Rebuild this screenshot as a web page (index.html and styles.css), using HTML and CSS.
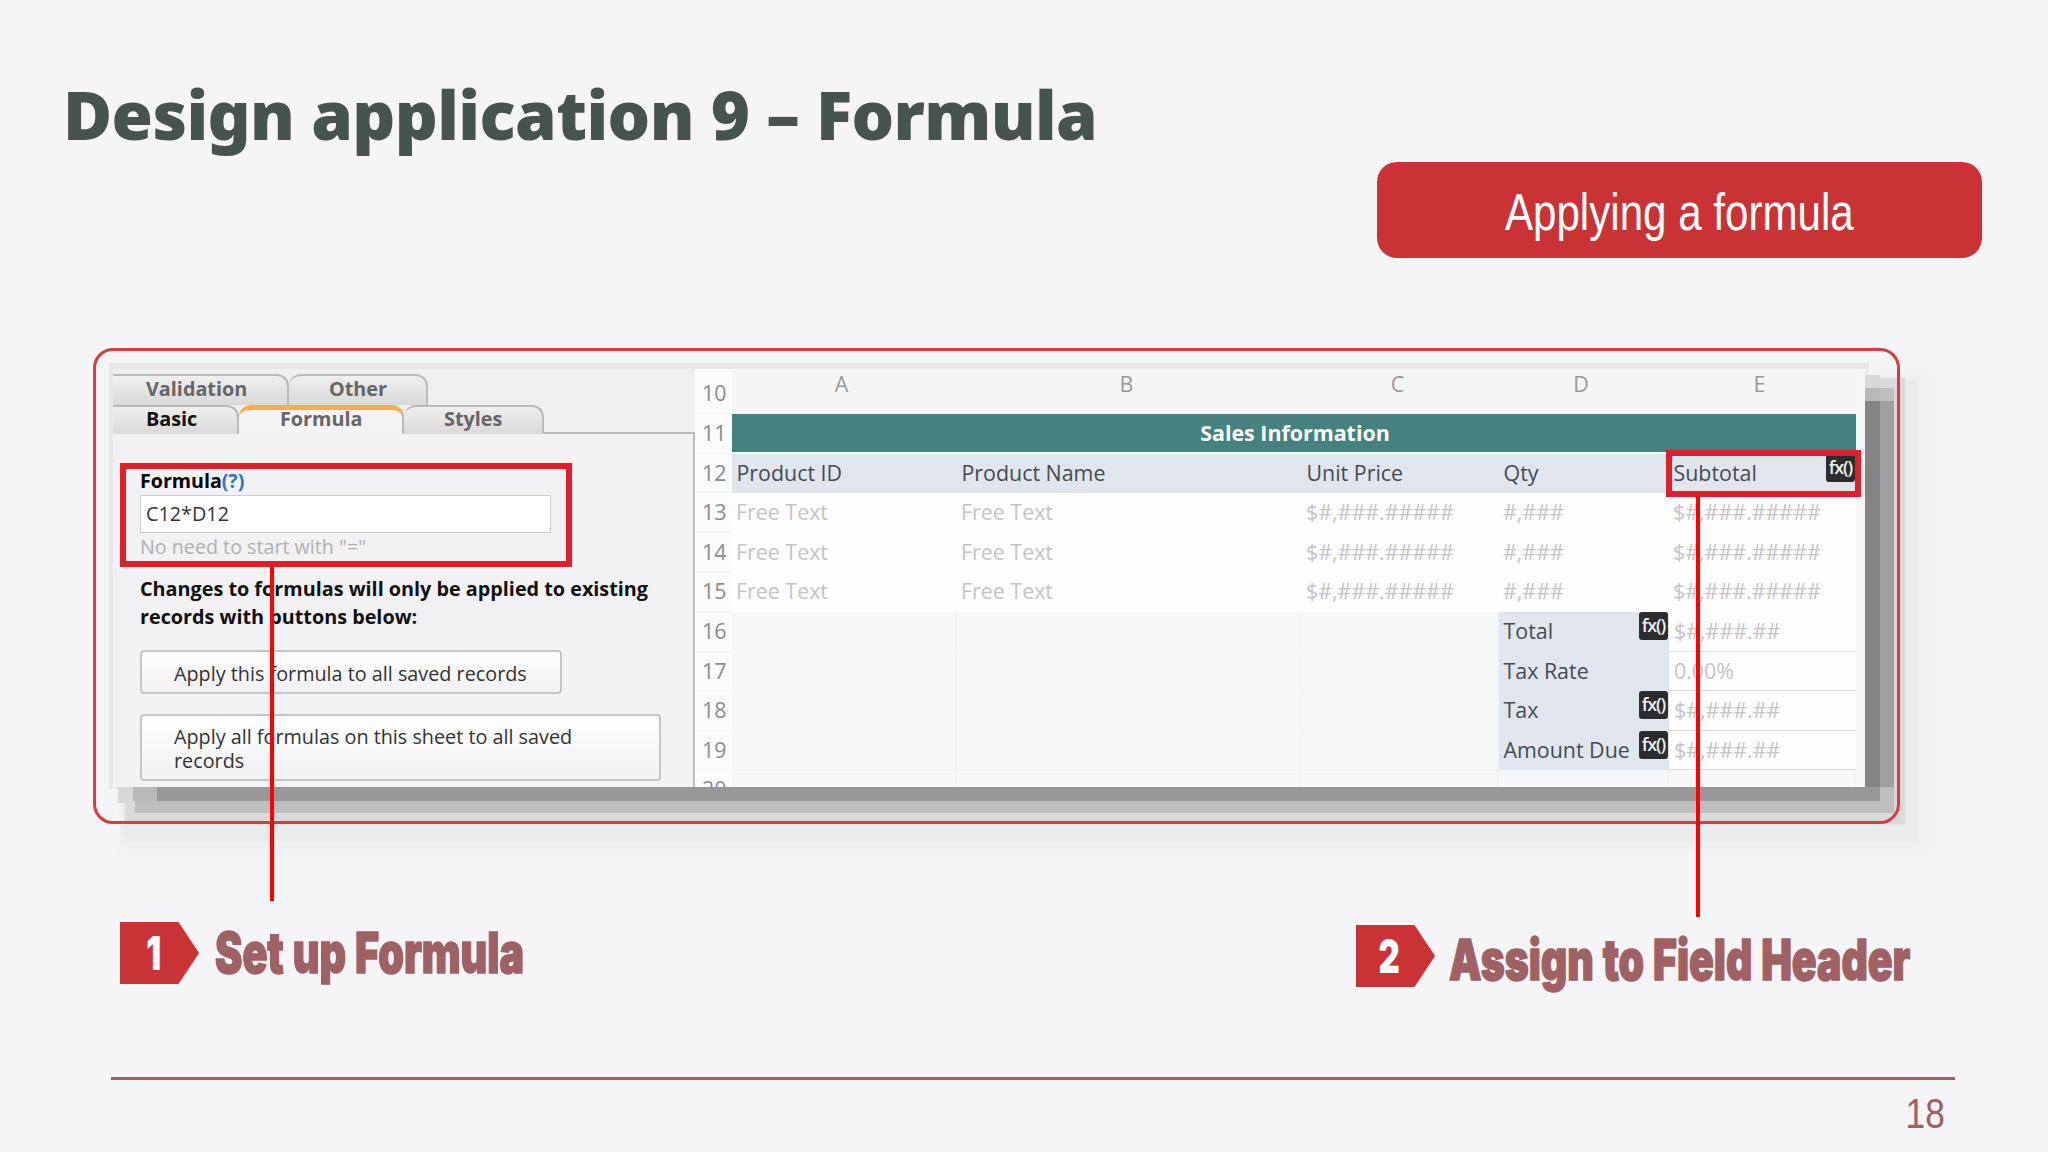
FILE: index.html
```
<!DOCTYPE html>
<html lang="en">
<head>
    <meta charset="UTF-8">
    <meta name="viewport" content="width=device-width, initial-scale=1.0">
    <title>Design application 9 – Formula</title>
    <link rel="stylesheet" href="styles.css">
</head>
<body>
    <div class="slide">
        <h1>Design application 9 – Formula</h1>
        <div class="topic"><span>Applying a formula</span></div>

        <div class="frame">
            <div class="app">
                <div class="panel">
                    <div class="tabs back-row">
                        <div class="tab tab-validation">Validation</div>
                        <div class="tab tab-other">Other</div>
                    </div>
                    <div class="tabs front-row">
                        <div class="tab tab-basic">Basic</div>
                        <div class="tab tab-formula">Formula</div>
                        <div class="tab tab-styles">Styles</div>
                        <div class="tab-line"></div>
                    </div>
                    <div class="settings">
                        <div class="field-label">Formula<span class="help">(?)</span></div>
                        <div class="input">C12*D12</div>
                        <div class="hint">No need to start with "="</div>
                        <div class="note">Changes to formulas will only be applied to existing<br>records with buttons below:</div>
                        <div class="btn btn-one">Apply this formula to all saved records</div>
                        <div class="btn btn-all">Apply all formulas on this sheet to all saved<br>records</div>
                    </div>
                </div>

                <div class="sheet">
                    <div class="num first">10</div>
                    <div class="col-head">A</div>
                    <div class="col-head">B</div>
                    <div class="col-head">C</div>
                    <div class="col-head">D</div>
                    <div class="col-head">E</div>

                    <div class="num">11</div>
                    <div class="banner">Sales Information</div>

                    <div class="num">12</div>
                    <div class="label">Product ID</div>
                    <div class="label">Product Name</div>
                    <div class="label">Unit Price</div>
                    <div class="label">Qty</div>
                    <div class="label">Subtotal<span class="fx">fx()</span></div>

                    <div class="num">13</div>
                    <div class="value">Free Text</div>
                    <div class="value">Free Text</div>
                    <div class="value">$#,###.#####</div>
                    <div class="value">#,###</div>
                    <div class="value">$#,###.#####</div>

                    <div class="num">14</div>
                    <div class="value">Free Text</div>
                    <div class="value">Free Text</div>
                    <div class="value">$#,###.#####</div>
                    <div class="value">#,###</div>
                    <div class="value">$#,###.#####</div>

                    <div class="num">15</div>
                    <div class="value">Free Text</div>
                    <div class="value">Free Text</div>
                    <div class="value">$#,###.#####</div>
                    <div class="value">#,###</div>
                    <div class="value">$#,###.#####</div>

                    <div class="num">16</div>
                    <div class="empty"></div>
                    <div class="empty"></div>
                    <div class="empty"></div>
                    <div class="label">Total<span class="fx">fx()</span></div>
                    <div class="value lined">$#,###.##</div>

                    <div class="num">17</div>
                    <div class="empty"></div>
                    <div class="empty"></div>
                    <div class="empty"></div>
                    <div class="label">Tax Rate</div>
                    <div class="value lined">0.00%</div>

                    <div class="num">18</div>
                    <div class="empty"></div>
                    <div class="empty"></div>
                    <div class="empty"></div>
                    <div class="label">Tax<span class="fx">fx()</span></div>
                    <div class="value lined">$#,###.##</div>

                    <div class="num">19</div>
                    <div class="empty"></div>
                    <div class="empty"></div>
                    <div class="empty"></div>
                    <div class="label">Amount Due<span class="fx">fx()</span></div>
                    <div class="value lined">$#,###.##</div>

                    <div class="num">20</div>
                    <div class="empty"></div>
                    <div class="empty"></div>
                    <div class="empty"></div>
                    <div class="empty"></div>
                    <div class="empty"></div>
                </div>
            </div>

            <!-- callouts over the app window -->
            <div class="outline"></div>
            <div class="mark mark-formula"></div>
            <div class="mark mark-subtotal"></div>
            <div class="line line-one"></div>
            <div class="line line-two"></div>
        </div>

        <div class="steps">
            <div class="step">
                <div class="marker"><span>1</span></div>
                <div class="step-text">Set up Formula</div>
            </div>
            <div class="step second">
                <div class="marker"><span>2</span></div>
                <div class="step-text">Assign to Field Header</div>
            </div>
        </div>

        <div class="footer"><span>18</span></div>
    </div>
</body>
</html>
```
FILE: styles.css
```
* {
    box-sizing: border-box;
}

body {
    margin: 0;
    background: #f5f4f6;
    font-family: "Open Sans", "Noto Sans", sans-serif;
}

.slide {
    width: 2048px;
    height: 1152px;
    overflow: hidden;
    display: flex;
    flex-direction: column;
}

h1 {
    margin: 74px 0 0 63px;
    height: 88px;
    font-family: "Noto Sans", "Open Sans", sans-serif;
    font-size: 67px;
    font-weight: 900;
    line-height: 80px;
    letter-spacing: -0.6px;
    color: #475350;
    white-space: nowrap;
}

.topic {
    align-self: flex-end;
    width: 605px;
    height: 96px;
    margin-right: 66px;
    border-radius: 20px;
    background: #ca3335;
    color: white;
    display: flex;
    justify-content: center;
    font-family: "Liberation Sans", Arial, sans-serif;
    font-size: 52px;
    line-height: 100px;
    white-space: nowrap;
}

.topic span {
    transform: scaleX(0.81);
}

/* app window in the red frame */
.frame {
    position: relative;
    width: 1807px;
    height: 476px;
    margin: 90px 0 0 93px;
    padding: 21px 0 0 20px;
}

.outline {
    position: absolute;
    inset: 0;
    border: 3px solid #d93c3e;
    border-radius: 20px;
}

/* stepped shadow, darkest band first */
.app {
    display: flex;
    width: 1752px;
    height: 418px;
    box-shadow:
        31px 16px 0 -16px #848385,
        29.5px 28.5px 0 -14.5px #999799,
        17.5px 16.5px 0 -2.5px #b8b7b9,
        45px 16px 0 -16px #9f9ea1,
        25.5px 22.5px 0 3.5px #bebdc0,
        10px 11px 0 5px #d8d8d9,
        26px 23px 1px 14px #dad9dc,
        31px 31px 3px 22px #ebeaea,
        36px 34px 6px 30px #f2f1f2,
        0 -2px 1px 4px #e8e9e9;
}

.panel {
    width: 582px;
    background: #efefef;
    padding-top: 5px;
    overflow: hidden;
}

.tabs {
    display: flex;
    font-size: 19.8px;
    font-weight: bold;
    line-height: 25px;
    color: #666;
}

.back-row {
    height: 31px;
}

.front-row {
    height: 29px;
}

.tab {
    border: 2px solid #bbb;
    border-left: none;
    border-bottom: none;
    border-radius: 0 12px 0 0;
    background: linear-gradient(#efefef, #d9d9d9);
}

.tab-validation {
    width: 176px;
    padding-left: 33px;
}

.tab-other {
    width: 139px;
    padding-left: 40px;
    border-radius: 12px 12px 0 0;
}

.tab-basic {
    width: 126px;
    padding-left: 33px;
    color: #111;
}

.front-row .tab {
    line-height: 23px;
}

.front-row .tab-formula {
    width: 165px;
    padding-left: 41px;
    line-height: 18px;
    border-top: 5px solid #f6b040;
    border-radius: 12px 12px 0 0;
    background: #f3f3f4;
}

.tab-styles {
    width: 140px;
    padding-left: 40px;
    border-radius: 12px 12px 0 0;
}

.tab-line {
    flex: 1;
    border-bottom: 2px solid #bbb;
}

.settings {
    height: 360px;
    padding: 34px 0 0 27px;
    border-right: 2px solid #bbb;
    background: #f2f1f3;
    font-size: 19.8px;
    color: #333;
    white-space: nowrap;
}

.field-label {
    height: 27px;
    line-height: 26px;
    font-size: 19.6px;
    font-weight: bold;
    color: #000;
}

.help {
    color: #2f77b8;
}

.input {
    width: 411px;
    height: 38px;
    padding-left: 5px;
    border: 1px solid #ccc;
    background: white;
    line-height: 36px;
}

.hint {
    height: 42px;
    line-height: 27px;
    color: #b0b0b0;
    font-size: 19.7px;
}

.note {
    height: 75px;
    line-height: 28px;
    font-size: 19.8px;
    font-weight: bold;
    color: #111;
}

.btn {
    padding-left: 32px;
    border: 2px solid #c6c6c8;
    border-radius: 4px;
    background: linear-gradient(#fff, #f1f1f3);
}

.btn-one {
    width: 422px;
    height: 44px;
    line-height: 43px;
}

.btn-all {
    width: 521px;
    height: 67px;
    margin-top: 20px;
    padding-top: 9px;
    line-height: 24px;
    font-size: 19.8px;
}

/* spreadsheet */
.sheet {
    flex: 1;
    display: grid;
    grid-template-columns: 37px 225px 345px 197px 170px 187px;
    grid-template-rows: 45px repeat(9, 39.6px);
    overflow: hidden;
    background: #f7f6f8;
    font-size: 21.4px;
    line-height: 37px;
    white-space: nowrap;
}

.num {
    padding-left: 5px;
    border-bottom: 1px solid #f1f0f3;
    border-left: 2px solid #fcfbfd;
    background: #fbfafc;
    color: #8c8c8c;
}

.num.first {
    padding-top: 5px;
}

.col-head {
    padding-right: 6px;
    text-align: center;
    line-height: 29px;
    color: #999;
    background: #f5f5f6;
}

.banner {
    grid-column: 2 / 7;
    margin-bottom: 2px;
    padding-left: 2px;
    background: #44817f;
    color: white;
    font-size: 21.4px;
    font-weight: bold;
    text-align: center;
}

.label {
    position: relative;
    padding-left: 4.5px;
    background: #e1e6ee;
    color: #444b52;
}

.value {
    padding-left: 4px;
    background: #fefefe;
    color: #c4c3c6;
}

.lined {
    padding-left: 5px;
    border-bottom: 1px solid #dcdcdf;
}

.empty {
    border-right: 2px solid #f3f2f4;
    border-bottom: 1px solid #f2f1f4;
}

.fx {
    position: absolute;
    top: 0;
    right: 1px;
    width: 29px;
    height: 28px;
    border-radius: 3px;
    background: #2c2d2f;
    color: #eee;
    font-size: 18px;
    font-weight: 600;
    line-height: 26px;
    letter-spacing: -1.1px;
    text-align: center;
}

/* callouts */
.mark {
    position: absolute;
    border: 6px solid #e31e2b;
}

.mark-formula {
    left: 27px;
    top: 115px;
    width: 452px;
    height: 104px;
}

.mark-subtotal {
    left: 1573px;
    top: 102px;
    width: 195px;
    height: 47px;
}

.line {
    position: absolute;
    width: 4px;
    background: #ff0000;
}

.line-one {
    left: 177px;
    top: 218px;
    height: 335px;
}

.line-two {
    left: 1603px;
    top: 148px;
    height: 421px;
}

/* steps */
.steps {
    display: flex;
    height: 253px;
    padding: 98px 0 0 120px;
}

.step {
    display: flex;
    flex: none;
    width: 1236px;
    height: 62px;
}

.second {
    width: 600px;
    margin-top: 3px;
}

.marker {
    flex: none;
    width: 79px;
    padding-right: 12px;
    background: #ca3335;
    clip-path: polygon(0 0, 74% 0, 100% 50%, 74% 100%, 0 100%);
    color: white;
    font-family: Inter, Roboto, sans-serif;
    font-size: 47px;
    font-weight: 900;
    line-height: 61px;
    text-align: center;
}

.marker span {
    display: inline-block;
    transform: scaleX(0.7);
}

.step-text {
    flex: none;
    margin-left: 16px;
    font-family: Inter, Roboto, sans-serif;
    font-size: 56px;
    font-weight: 900;
    line-height: 62px;
    color: #9f6163;
    -webkit-text-stroke: 1.5px #9f6163;
    white-space: nowrap;
    word-spacing: 1px;
    transform: scaleX(0.735);
    transform-origin: left;
}

.second .step-text {
    margin-left: 14px;
    padding-top: 4px;
    transform: scaleX(0.73);
}

.footer {
    width: 1844px;
    margin-left: 111px;
    padding-right: 10px;
    border-top: 3px solid #9a6164;
    color: #9f6163;
    font-family: "Liberation Sans", Arial, sans-serif;
    font-size: 43px;
    line-height: 67px;
    text-align: right;
}

.footer span {
    display: inline-block;
    transform: scaleX(0.82);
    transform-origin: right;
}
```
